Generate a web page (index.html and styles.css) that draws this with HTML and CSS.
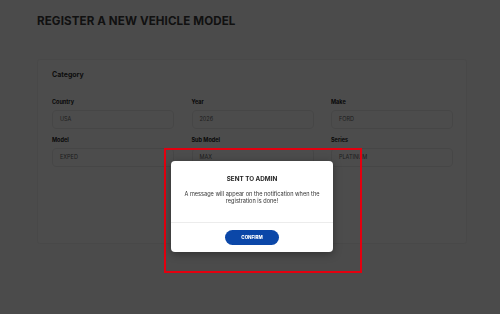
FILE: index.html
```html
<!DOCTYPE html>
<html lang="en">
<head>
  <meta charset="UTF-8" />
  <meta name="viewport" content="width=device-width, initial-scale=1" />
  <title>Register a new vehicle model</title>
  <link rel="stylesheet" href="styles.css">
</head>
<body>
  <div class="page">
    <h1 class="page-title">REGISTER A NEW VEHICLE MODEL</h1>

    <div class="card">
      <h2 class="card-title">Category</h2>
      <div class="fields">
        <div class="field">
          <label>Country</label>
          <div class="input">USA</div>
        </div>
        <div class="field">
          <label>Year</label>
          <div class="input">2026</div>
        </div>
        <div class="field">
          <label>Make</label>
          <div class="input">FORD</div>
        </div>
        <div class="field">
          <label>Model</label>
          <div class="input">EXPED</div>
        </div>
        <div class="field">
          <label>Sub Model</label>
          <div class="input">MAX</div>
        </div>
        <div class="field">
          <label>Series</label>
          <div class="input">PLATINUM</div>
        </div>
      </div>
    </div>
  </div>

  <div class="overlay"></div>

  <div class="highlight">
    <div class="modal">
      <div class="modal-body">
        <h3>SENT TO ADMIN</h3>
        <p>A message will appear on the notification when the registration is done!</p>
      </div>
      <div class="modal-footer">
        <button type="button">CONFIRM</button>
      </div>
    </div>
  </div>
</body>
</html>
```

FILE: styles.css
```css
body {
  margin: 0;
  font-family: "Inter", "Liberation Sans", sans-serif;
  background: #fafafa;
  height: 314px;
  overflow: hidden;
}
.page {
  padding: 14px 33px 0 37px;
}
.page-title {
  margin: 0 0 30px;
  font-size: 11.6px;
  line-height: 15px;
  font-weight: 700;
  color: #3a3a3a;
  letter-spacing: 0.1px;
}
.card {
  background: #ffffff;
  border: 1px solid #f2f2f2;
  border-radius: 3px;
  padding: 11px 14px 76px 14px;
}
.card-title {
  margin: 0 0 20px;
  font-size: 7px;
  line-height: 8px;
  font-weight: 700;
  color: #333;
}
.fields {
  display: grid;
  grid-template-columns: repeat(3, 122px);
  column-gap: 17.5px;
  row-gap: 8px;
}
.field label {
  display: block;
  font-size: 5.5px;
  line-height: 6px;
  font-weight: 700;
  color: #222;
  margin-bottom: 5px;
}
.input {
  height: 19px;
  box-sizing: border-box;
  border: 1px solid #ececec;
  border-radius: 4px;
  padding: 0 7px;
  font-size: 5.5px;
  line-height: 17px;
  color: #666;
}
.overlay {
  position: fixed;
  inset: 0;
  background: rgba(0, 0, 0, 0.7);
}
.highlight {
  position: absolute;
  left: 164px;
  top: 148px;
  width: 198px;
  height: 125px;
  box-sizing: border-box;
  border: 2px solid #e3000f;
  padding: 11px 0 0 5px;
}
.modal {
  width: 162px;
  background: #fff;
  border-radius: 4px;
  box-shadow: 0 2px 8px rgba(0, 0, 0, 0.35);
}
.modal-body {
  padding: 14px 8px 0;
  text-align: center;
  border-bottom: 1px solid #ececec;
  height: 47px;
}
.modal-body h3 {
  margin: 0 0 8px;
  font-size: 6.3px;
  font-weight: 700;
  color: #222;
}
.modal-body p {
  margin: 0;
  font-size: 5.6px;
  line-height: 7px;
  color: #333;
}
.modal-footer {
  display: flex;
  justify-content: center;
  padding: 7px 0 7px;
}
.modal-footer button {
  width: 54px;
  height: 15px;
  border: none;
  border-radius: 8px;
  background: #0b47a8;
  color: #fff;
  font-family: "Inter", "Liberation Sans", sans-serif;
  font-size: 4.5px;
  font-weight: 800;
  padding: 0;
}
```
